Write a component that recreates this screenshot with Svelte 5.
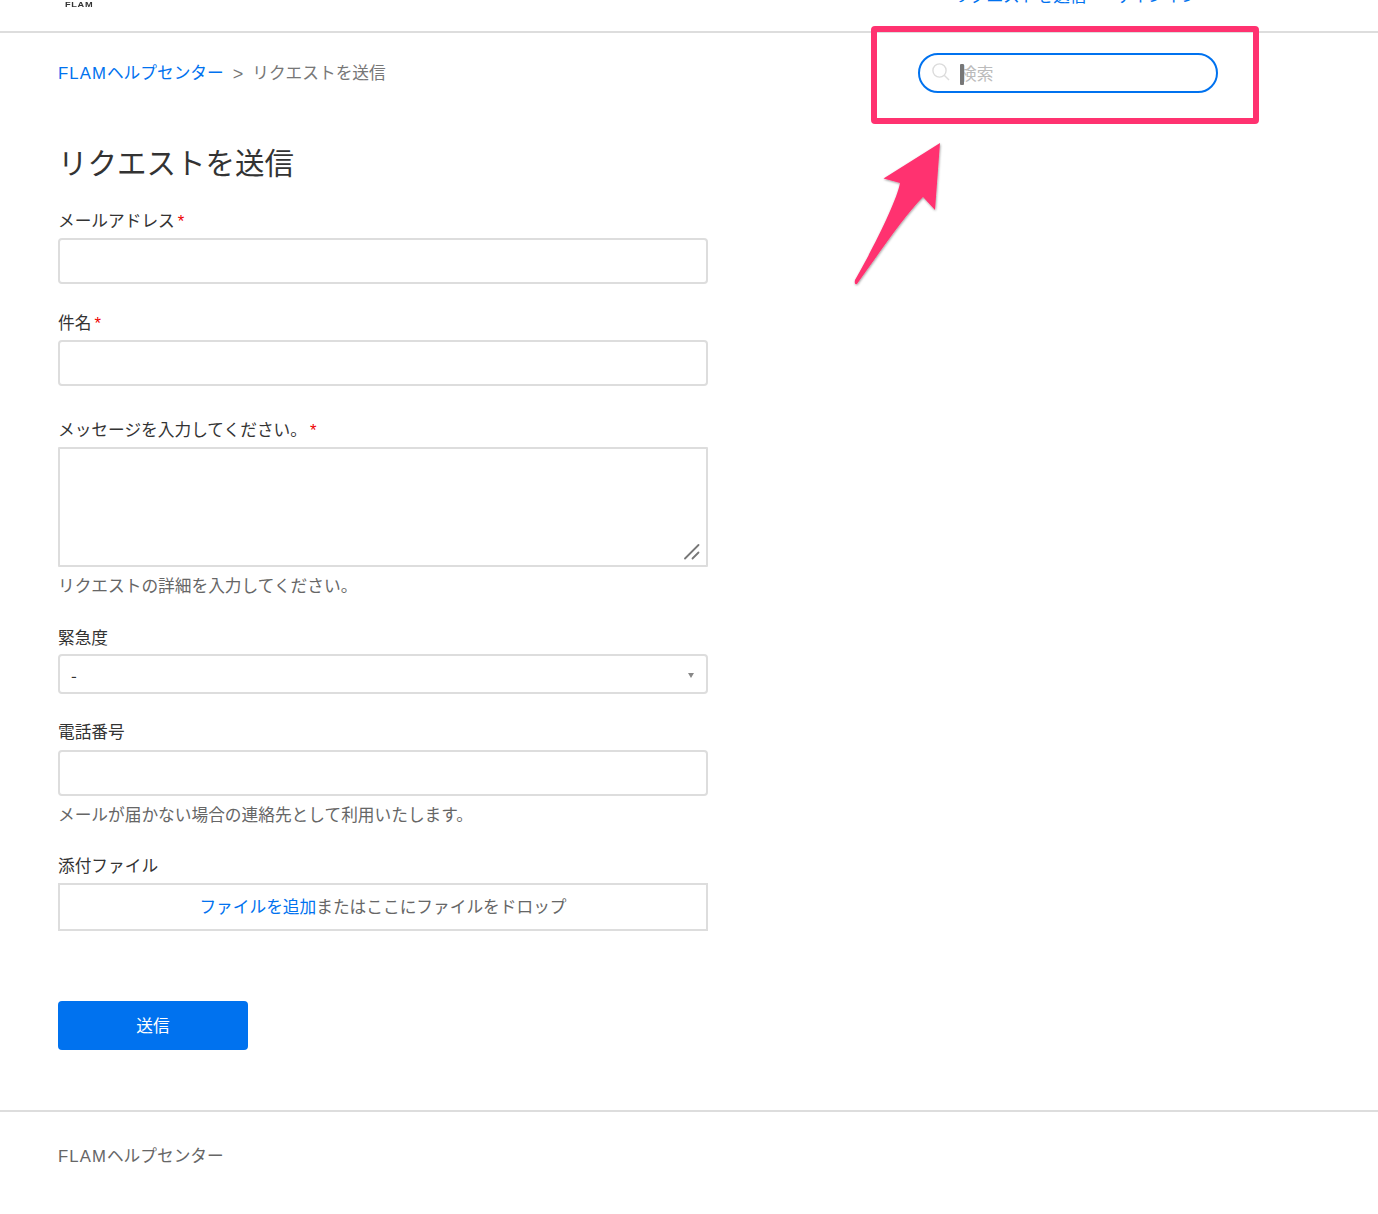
<script>
  let priority = "-";
</script>

<header class="topbar">
  <span class="logo">FLAM</span>
  <nav>
    <a href="#submit">リクエストを送信</a>
    <a href="#signin">サインイン</a>
  </nav>
</header>

<main>
  <div class="subnav">
    <div class="breadcrumbs">
      <a href="#home"><span class="latin">FLAM</span>ヘルプセンター</a>
      <span class="sep">&gt;</span>
      <span class="current">リクエストを送信</span>
    </div>
    <div class="search">
      <svg class="search-icon" width="20" height="20" viewBox="0 0 20 20" fill="none" stroke="#dcdcdc" stroke-width="1.4">
        <circle cx="8.5" cy="8.5" r="6.6" />
        <path d="M13.2 13.2 18 18" />
      </svg>
      <span class="caret"></span>
      <input type="text" placeholder="検索" />
    </div>
  </div>

  <h1>リクエストを送信</h1>

  <form>
    <label class="label email" for="email">メールアドレス<span class="req">*</span></label>
    <input class="box" id="email" type="text" />

    <label class="label" for="subject">件名<span class="req">*</span></label>
    <input class="box" id="subject" type="text" />

    <label class="label message" for="message">メッセージを入力してください。<span class="req">*</span></label>
    <div class="textarea-wrap">
      <textarea id="message"></textarea>
      <svg class="grip" width="16" height="16" viewBox="0 0 16 16" stroke="#777" stroke-width="1.8" stroke-linecap="round">
        <path d="M1 14.500 14.500 1" />
        <path d="M8.500 14.500 14.500 8.500" />
      </svg>
    </div>
    <p class="hint">リクエストの詳細を入力してください。</p>

    <label class="label priority" for="priority">緊急度</label>
    <div class="select-wrap">
      <select id="priority" bind:value={priority}>
        <option value="-">-</option>
      </select>
      <span class="arrow"></span>
    </div>

    <label class="label phone" for="phone">電話番号</label>
    <input class="box" id="phone" type="text" />
    <p class="hint">メールが届かない場合の連絡先として利用いたします。</p>

    <span class="label attach">添付ファイル</span>
    <div class="drop"><a href="#add">ファイルを追加</a>またはここにファイルをドロップ</div>

    <button type="button" class="send">送信</button>
  </form>
</main>

<footer><span class="latin">FLAM</span>ヘルプセンター</footer>

<!-- annotation drawn over the screenshot -->
<svg class="markup" width="1378" height="300" viewBox="0 0 1378 300">
  <defs>
    <filter id="arrow-shadow" x="-20%" y="-20%" width="140%" height="140%">
      <feDropShadow dx="0.5" dy="1" stdDeviation="0.8" flood-color="#000" flood-opacity="0.4" />
    </filter>
  </defs>
  <rect x="874" y="29" width="382" height="92" rx="1" fill="none" stroke="#ff3270" stroke-width="6" />
  <path
    d="M940 143 L883.500 178.500 Q893 181 900 183 C897 200 875 245 855 280 Q854 285 857 284 C880 252 905 215 923 197 L935 210 Z"
    fill="#ff3270"
    filter="url(#arrow-shadow)"
  />
</svg>

<style>
  :global(body) {
    margin: 0;
    background: #fff;
    font-family: "Liberation Sans", "Noto Sans CJK JP", sans-serif;
    font-size: 16.7px;
    color: #333;
  }

  a {
    color: #0072ef;
    text-decoration: none;
  }

  .latin {
    letter-spacing: 1.1px;
  }

  .topbar {
    height: 31px;
    padding: 0 180px 22px 65px;
    margin-top: -22px;
    display: flex;
    justify-content: space-between;
    align-items: flex-end;
    border-bottom: 2px solid #ddd;
    line-height: 24px;
  }

  .logo {
    font-size: 8px;
    font-weight: bold;
    line-height: 8px;
    letter-spacing: 0.6px;
    transform: scaleX(1.15);
    transform-origin: left bottom;
    color: #333;
  }

  nav {
    display: flex;
    gap: 28px;
  }

  main {
    padding: 20px 160px 0 58px;
  }

  .subnav {
    display: flex;
    justify-content: space-between;
    align-items: center;
  }

  .breadcrumbs {
    display: flex;
    gap: 9px;
    padding-top: 2px;
    line-height: 24px;
  }

  .sep,
  .current {
    color: #777;
  }

  .sep {
    font-size: 18px;
  }

  .search {
    position: relative;
    width: 300px;
    height: 40px;
    box-sizing: border-box;
    border: 2px solid #0072ef;
    border-radius: 20px;
    display: flex;
    align-items: center;
    padding: 3px 0 0 40px;
  }

  .search input {
    border: 0;
    outline: 0;
    padding: 0;
    width: 100%;
    background: none;
    font: inherit;
  }

  .search input::placeholder {
    color: #bbb;
    opacity: 1;
  }

  .search-icon {
    position: absolute;
    left: 11px;
    top: 7px;
  }

  .caret {
    position: absolute;
    left: 40px;
    top: 9px;
    width: 4px;
    height: 21px;
    border-radius: 1px;
    background: #777;
  }

  h1 {
    margin: 51px 0 0;
    font-size: 29.5px;
    font-weight: 400;
    line-height: 40px;
  }

  form {
    width: 650px;
    display: flex;
    flex-direction: column;
  }

  .label {
    display: block;
    line-height: 24px;
    padding-top: 1px;
    margin: 27px 0 4px;
  }

  .label.email {
    margin-top: 25px;
  }

  .label.message {
    margin-top: 32px;
  }

  .label.priority {
    margin: 27px 0 3px;
  }

  .label.phone {
    margin: 26px 0 5px;
  }

  .label.attach {
    margin: 26px 0 4px;
  }

  .req {
    color: #e00;
    margin-left: 3px;
  }

  .box,
  textarea,
  select {
    box-sizing: border-box;
    width: 100%;
    border: 2px solid #ddd;
    border-radius: 4px;
    background: #fff;
    outline: 0;
    font: inherit;
    color: #333;
  }

  .box {
    display: block;
    height: 46px;
  }

  .textarea-wrap {
    position: relative;
    height: 120px;
  }

  textarea {
    display: block;
    height: 120px;
    border-radius: 1px;
    resize: none;
  }

  .grip {
    position: absolute;
    right: 8px;
    bottom: 7px;
  }

  .hint {
    margin: 8px 0 0;
    line-height: 24px;
    color: #666;
  }

  .select-wrap {
    position: relative;
  }

  select {
    display: block;
    height: 40px;
    padding: 1px 11px 0;
    font-family: "Noto Sans CJK JP", sans-serif;
    appearance: none;
  }

  .arrow {
    position: absolute;
    right: 14px;
    top: 19px;
    border-left: 3px solid transparent;
    border-right: 3px solid transparent;
    border-top: 5px solid #888;
  }

  .drop {
    box-sizing: border-box;
    height: 48px;
    padding-bottom: 2px;
    border: 2px solid #ddd;
    display: flex;
    align-items: center;
    justify-content: center;
    color: #666;
  }

  .send {
    width: 190px;
    height: 49px;
    margin-top: 70px;
    padding: 0 0 2px;
    border: 0;
    border-radius: 4px;
    background: #0072ef;
    color: #fff;
    font: inherit;
  }

  footer {
    margin-top: 60px;
    border-top: 2px solid #ddd;
    padding: 33px 58px 45px;
    line-height: 24px;
    color: #666;
  }

  .markup {
    position: absolute;
    left: 0;
    top: 0;
    pointer-events: none;
  }
</style>
